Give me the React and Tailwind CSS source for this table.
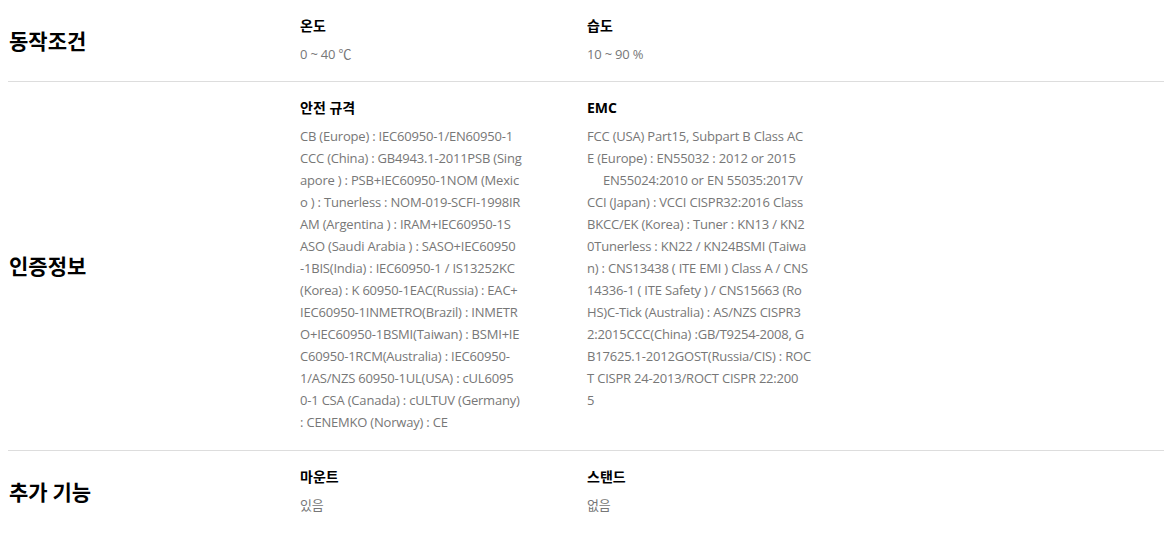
import React from 'react';

const safetyLines = [
    'CB (Europe) : IEC60950-1/EN60950-1',
    'CCC (China) : GB4943.1-2011PSB (Sing',
    'apore ) : PSB+IEC60950-1NOM (Mexic',
    'o ) : Tunerless : NOM-019-SCFI-1998IR',
    'AM (Argentina ) : IRAM+IEC60950-1S',
    'ASO (Saudi Arabia ) : SASO+IEC60950',
    '-1BIS(India) : IEC60950-1 / IS13252KC',
    '(Korea) : K 60950-1EAC(Russia) : EAC+',
    'IEC60950-1INMETRO(Brazil) : INMETR',
    'O+IEC60950-1BSMI(Taiwan) : BSMI+IE',
    'C60950-1RCM(Australia) : IEC60950-',
    '1/AS/NZS 60950-1UL(USA) : cUL6095',
    '0-1 CSA (Canada) : cULTUV (Germany)',
    ': CENEMKO (Norway) : CE',
];

const emcLines = [
    'FCC (USA) Part15, Subpart B Class AC',
    'E (Europe) : EN55032 : 2012 or 2015',
    '     EN55024:2010 or EN 55035:2017V',
    'CCI (Japan) : VCCI CISPR32:2016 Class',
    'BKCC/EK (Korea) : Tuner : KN13 / KN2',
    '0Tunerless : KN22 / KN24BSMI (Taiwa',
    'n) : CNS13438 ( ITE EMI ) Class A / CNS',
    '14336-1 ( ITE Safety ) / CNS15663 (Ro',
    'HS)C-Tick (Australia) : AS/NZS CISPR3',
    '2:2015CCC(China) :GB/T9254-2008, G',
    'B17625.1-2012GOST(Russia/CIS) : ROC',
    'T CISPR 24-2013/ROCT CISPR 22:200',
    '5',
];

const rows = [
    {
        title: '동작조건',
        items: [
            { label: '온도', lines: ['0 ~ 40 ℃'] },
            { label: '습도', lines: ['10 ~ 90 %'] },
        ],
    },
    {
        title: '인증정보',
        items: [
            { label: '안전 규격', lines: safetyLines },
            { label: 'EMC', lines: emcLines },
        ],
    },
    {
        title: '추가 기능',
        items: [
            { label: '마운트', lines: ['있음'] },
            { label: '스탠드', lines: ['없음'] },
        ],
    },
];

const SpecItem = ({ label, lines }) => (
    <div className="w-[287px] shrink-0">
        <p className="text-[14px] leading-[20px] font-bold text-black">{label}</p>
        <div className="mt-[7px] text-[13px] leading-[22px] text-[#777777] tracking-[-0.2px]">
            {lines.map((line, idx) => (
                <div key={idx} className="whitespace-pre">{line}</div>
            ))}
        </div>
    </div>
);

const App = () => {
    return (
        <div
            className="w-full bg-white px-2"
            style={{ fontFamily: '"Open Sans", "Noto Sans CJK KR", sans-serif' }}
        >
            {rows.map((row, idx) => (
                <div
                    key={row.title}
                    className={`flex items-center pt-4 ${idx === 1 ? 'pb-[17px]' : 'pb-4'} ${idx < rows.length - 1 ? 'border-b border-[#dddddd]' : ''}`}
                >
                    <h3
                        className="w-[292px] shrink-0 pl-[1px] text-[21px] font-bold text-black"
                        style={{ fontFamily: '"Noto Sans CJK KR", sans-serif' }}
                    >
                        {row.title}
                    </h3>
                    <div className="flex">
                        {row.items.map((item) => (
                            <SpecItem key={item.label} {...item} />
                        ))}
                    </div>
                </div>
            ))}
        </div>
    );
};

export default App;
